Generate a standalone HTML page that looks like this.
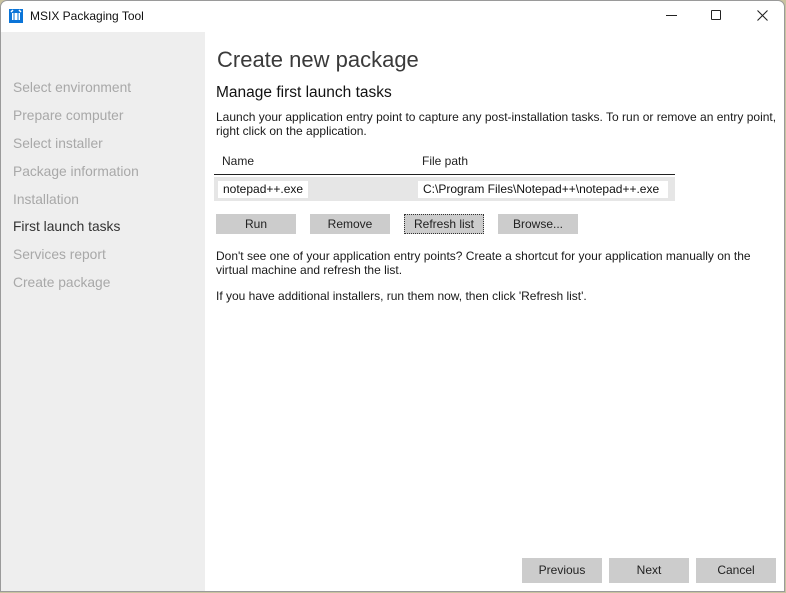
<!DOCTYPE html>
<html><head><style>
*{margin:0;padding:0;box-sizing:border-box}
body{width:786px;height:593px;overflow:hidden;background:#c9c3a0;font-family:"Liberation Sans",sans-serif;position:relative}
#win{position:absolute;left:0;top:0;width:785px;height:592px;background:#fff;border:1px solid #9a9a9a;border-radius:7px 7px 0 0;overflow:hidden}
.t{position:absolute;white-space:nowrap}
#side{position:absolute;left:0;top:31px;width:204px;height:562px;background:#eeeeee}
.nav{position:absolute;left:12px;font-size:13.8px;color:#a8a8a8}
.btn{position:absolute;height:20px;background:#cccccc;font-size:12px;color:#222;text-align:center;line-height:20px}
.bb{position:absolute;top:557px;width:80px;height:25px;background:#cccccc;font-size:12px;color:#222;text-align:center;line-height:25px}
p{font-size:12px;color:#1a1a1a;line-height:14px}
</style></head><body>
<div id="win">
<svg style="position:absolute;left:8px;top:7px" width="14" height="15" viewBox="0 0 14 15"><rect x="0" y="1" width="14" height="14" fill="#0a74d8"/><path d="M3 5h8v7H3z" fill="#fff"/><path d="M5 5v7M9 5v7" stroke="#0a74d8" stroke-width="1"/><path d="M2 4l2-2M12 4l-2-2" stroke="#fff" stroke-width="1.5"/></svg>
<div class="t" style="left:29px;top:8px;font-size:12px;color:#111">MSIX Packaging Tool</div>
<div class="t" style="left:665px;top:14px;width:11px;height:1px;background:#222"></div>
<div class="t" style="left:710px;top:9px;width:10px;height:10px;border:1px solid #222;border-radius:1px"></div>
<svg class="t" style="left:756px;top:9px" width="11" height="11" viewBox="0 0 11 11"><path d="M0.5 0.5L10.5 10.5M10.5 0.5L0.5 10.5" stroke="#222" stroke-width="1.1"/></svg>
<div id="side">
<div class="nav" style="top:48px">Select environment</div>
<div class="nav" style="top:76px">Prepare computer</div>
<div class="nav" style="top:104px">Select installer</div>
<div class="nav" style="top:132px">Package information</div>
<div class="nav" style="top:160px">Installation</div>
<div class="nav" style="top:187px;color:#333">First launch tasks</div>
<div class="nav" style="top:215px">Services report</div>
<div class="nav" style="top:243px">Create package</div>
</div>
<div class="t" style="left:216px;top:46px;font-size:22px;color:#3a3a3a;font-weight:300">Create new package</div>
<div class="t" style="left:215px;top:83px;font-size:15.5px;color:#111">Manage first launch tasks</div>
<p class="t" style="left:215px;top:109px">Launch your application entry point to capture any post-installation tasks. To run or remove an entry point,<br>right click on the application.</p>
<div class="t" style="left:221px;top:153px;font-size:12px;color:#222">Name</div>
<div class="t" style="left:421px;top:153px;font-size:12px;color:#222">File path</div>
<div class="t" style="left:213px;top:173px;width:461px;height:1px;background:#222"></div>
<div class="t" style="left:213px;top:176px;width:461px;height:24px;background:#e6e6e6"></div>
<div class="t" style="left:217px;top:180px;width:90px;height:17px;background:#fff;font-size:12px;line-height:17px;padding-left:5px;color:#111">notepad++.exe</div>
<div class="t" style="left:417px;top:180px;width:250px;height:17px;background:#fff;font-size:12px;line-height:17px;padding-left:5px;color:#111">C:\Program Files\Notepad++\notepad++.exe</div>
<div class="btn" style="left:215px;top:213px;width:80px">Run</div>
<div class="btn" style="left:309px;top:213px;width:80px">Remove</div>
<div class="btn" style="left:403px;top:213px;width:80px;border:1px dotted #333;line-height:18px">Refresh list</div>
<div class="btn" style="left:497px;top:213px;width:80px">Browse...</div>
<p class="t" style="left:215px;top:248px">Don't see one of your application entry points? Create a shortcut for your application manually on the<br>virtual machine and refresh the list.</p>
<p class="t" style="left:215px;top:288px">If you have additional installers, run them now, then click 'Refresh list'.</p>
<div class="bb" style="left:521px">Previous</div>
<div class="bb" style="left:608px">Next</div>
<div class="bb" style="left:695px">Cancel</div>
</div>
</body></html>
